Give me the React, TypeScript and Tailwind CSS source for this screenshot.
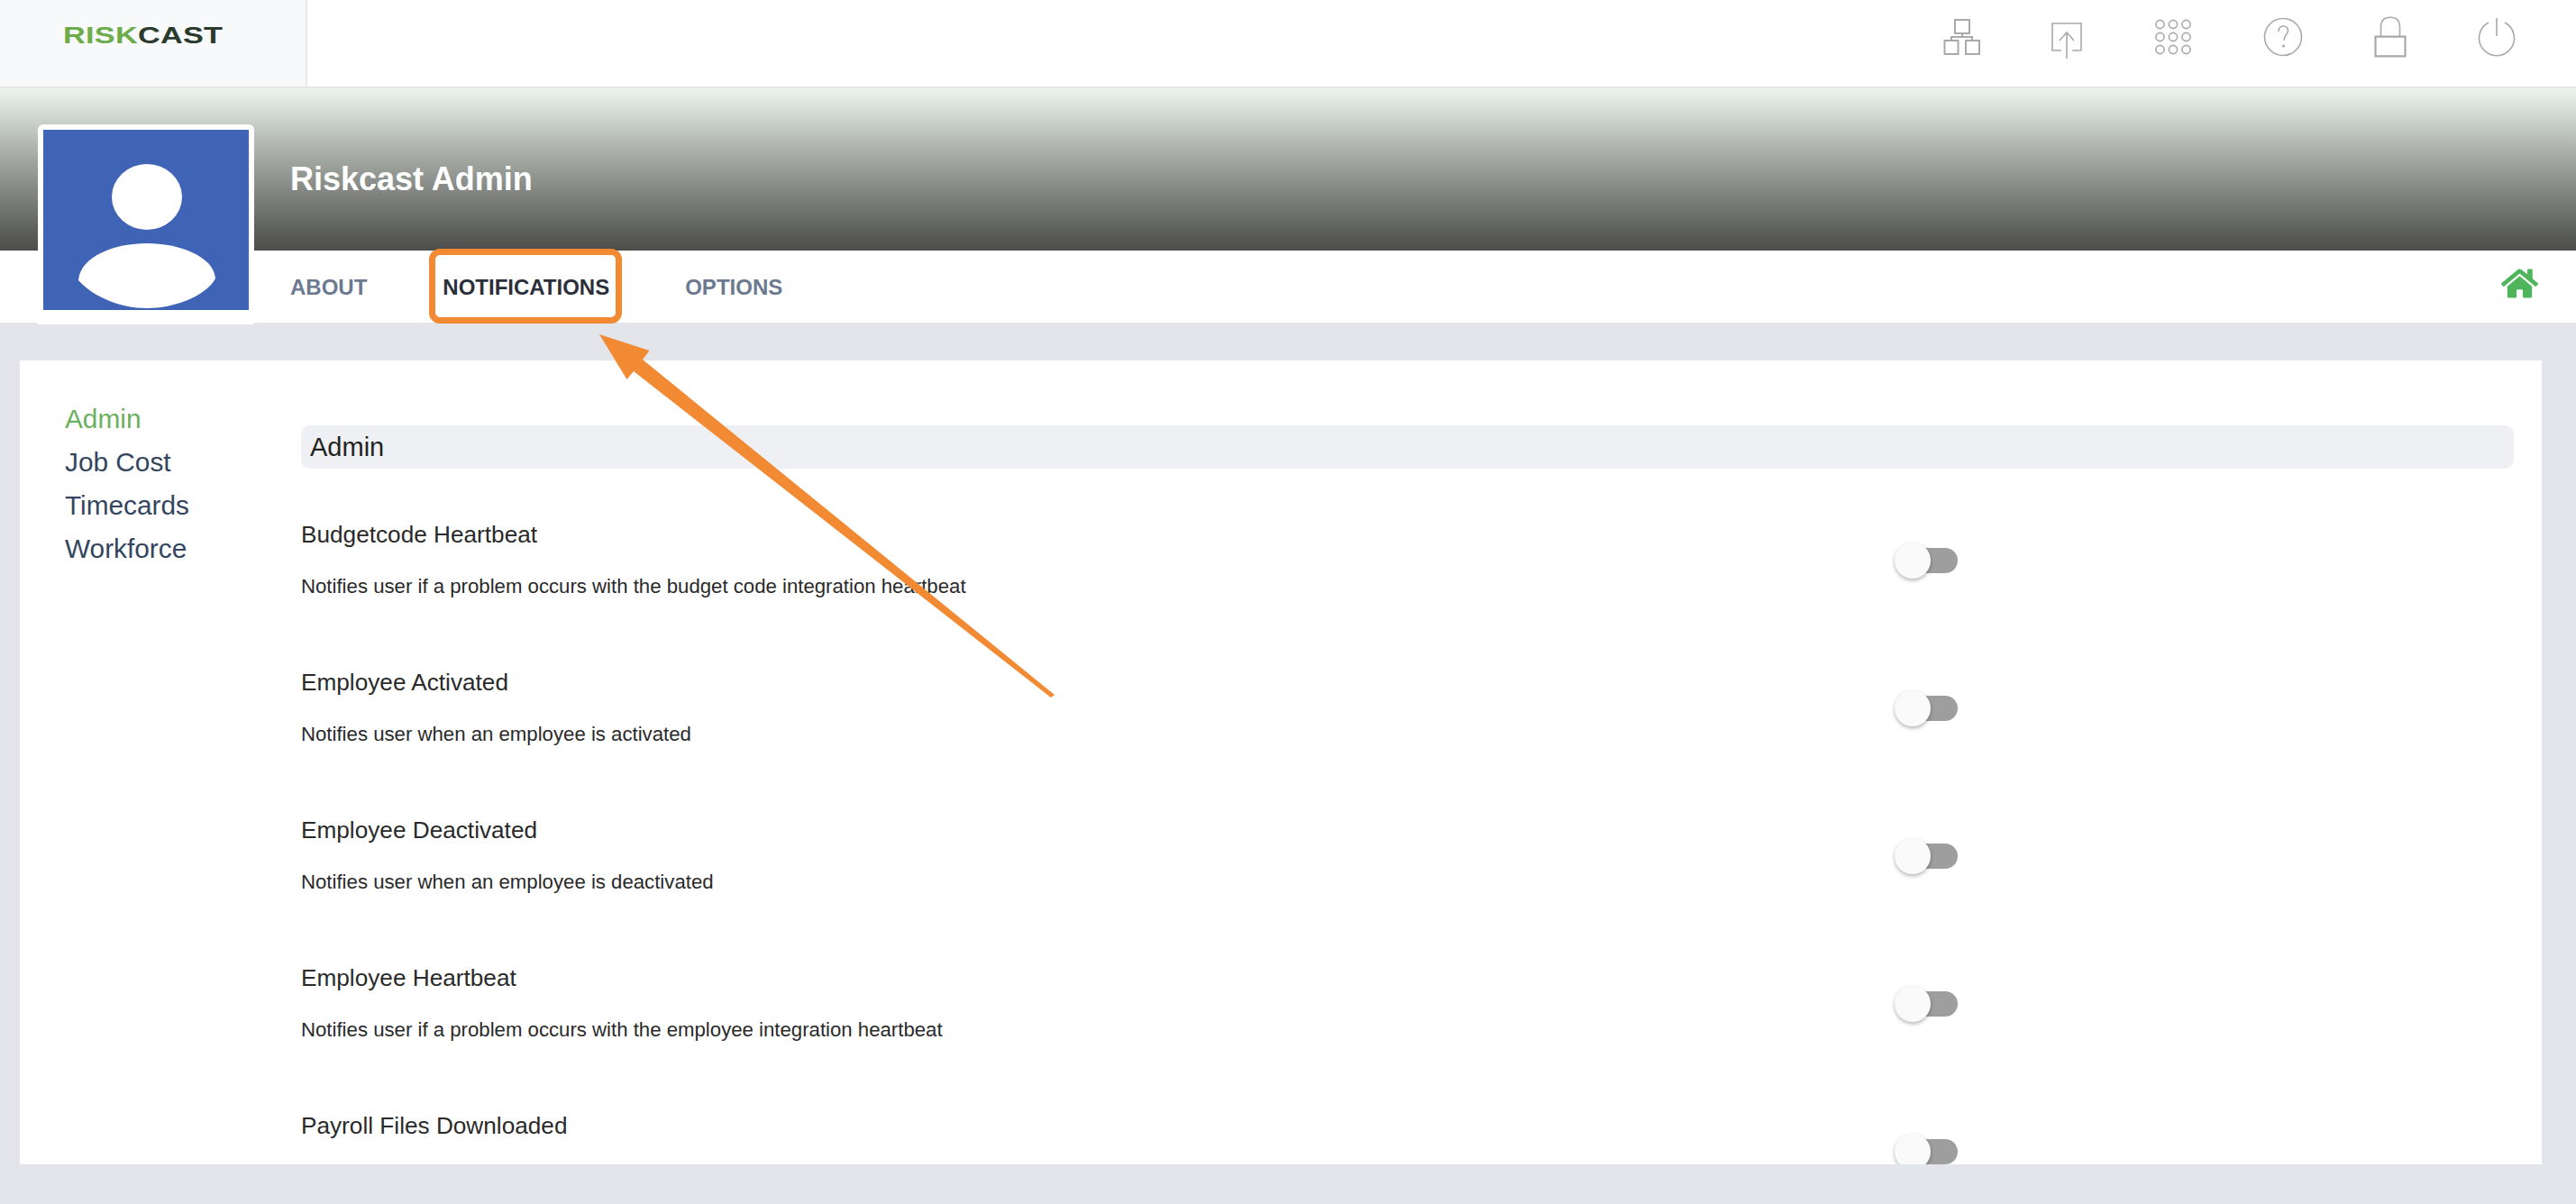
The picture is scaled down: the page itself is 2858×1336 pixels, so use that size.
import React from 'react';
import { FaHome } from 'react-icons/fa';

const notifications = [
  { title: 'Budgetcode Heartbeat', text: 'Notifies user if a problem occurs with the budget code integration heartbeat' },
  { title: 'Employee Activated', text: 'Notifies user when an employee is activated' },
  { title: 'Employee Deactivated', text: 'Notifies user when an employee is deactivated' },
  { title: 'Employee Heartbeat', text: 'Notifies user if a problem occurs with the employee integration heartbeat' },
  { title: 'Payroll Files Downloaded', text: '' },
];

const iconProps = {
  width: 48,
  height: 48,
  viewBox: '0 0 48 48',
  fill: 'none',
  stroke: '#a9a9a9',
  strokeWidth: 1.6,
};

const TopIcons = () => (
  <div className="flex items-start pr-[64px] pt-[18px]">
    <svg {...iconProps}>
      <path d="M16 4h16v15H16zM4.5 27h15v15h-15zM28 27h15v15H28zM24 19v4M12 27v-4h23v4" strokeWidth={2} />
    </svg>
    <svg {...iconProps} className="ml-[68px]">
      <path d="M18 38H8V8h32v30H30M24 47V18M16 27l8-9 8 9" />
    </svg>
    <svg {...iconProps} className="ml-[70px]">
      {[9.5, 24, 38.5].map(x =>
        [9, 23, 37].map(y => <circle key={`${x}-${y}`} cx={x} cy={y} r={4.6} />)
      )}
    </svg>
    <svg {...iconProps} className="ml-[74px]">
      <circle cx={24} cy={23} r={20.5} />
      <path d="M19 17c0-4 2.500-6 5.500-6s5 2.500 5 5c0 4-4.500 5-4.500 11" />
      <circle cx={24.500} cy={33} r={0.8} />
    </svg>
    <svg {...iconProps} className="ml-[71px]">
      <path d="M7.500 22.700h33v21.600h-33z" strokeWidth={2.2} />
      <path d="M13.500 22.700V12c0-7 4-10.700 10.500-10.700S34.500 5 34.500 12v10.700" />
    </svg>
    <svg {...iconProps} className="ml-[70px]">
      <path d="M15 7A19.500 19.500 0 1 0 33 7M24 2v20" />
    </svg>
  </div>
);

const Toggle = () => (
  <div className="relative mt-[25px] h-[40px] w-[70px] shrink-0">
    <div className="absolute left-[10px] top-[6px] h-[28px] w-[60px] rounded-full bg-[#9e9e9e]" />
    <div className="absolute left-0 top-0 h-[40px] w-[40px] rounded-full bg-[#fafafa] shadow-[0_2px_4px_rgba(0,0,0,0.3)]" />
  </div>
);

const App: React.FC = () => {
  return (
    <div className="relative flex h-[1336px] w-[2858px] flex-col overflow-hidden bg-[#e4e5ea] font-['Liberation_Sans',Arial,sans-serif]">
      {/* top bar */}
      <header className="flex h-[98px] shrink-0 justify-between border-b-2 border-[#e6e6e6] bg-white">
        <div className="flex w-[341px] items-center border-r-2 border-[#e9eaec] bg-[#f8f9fb] pb-[18px] pl-[70px]">
          <span className="origin-left scale-x-[1.37] text-[25px] font-bold leading-none tracking-[0.2px]">
            <span className="text-[#6cac4a]">RISK</span>
            <span className="text-[#2a3a2c]">CAST</span>
          </span>
        </div>
        <TopIcons />
      </header>

      {/* profile banner */}
      <div className="flex h-[180px] shrink-0 items-center bg-gradient-to-b from-[#eef5ee] to-[#4c4d4a] pl-[322px] pt-[22px]">
        <h1 className="text-[36px] font-bold text-white">Riskcast Admin</h1>
      </div>

      {/* tabs */}
      <nav className="flex h-[80px] shrink-0 items-center justify-between bg-white pl-[322px] pr-[42px]">
        <div className="flex gap-[84px] pt-[1px] text-[24px] font-bold text-[#6b7a90]">
          <span>ABOUT</span>
          <span className="text-[#2b2f3a]">NOTIFICATIONS</span>
          <span>OPTIONS</span>
        </div>
        <FaHome className="mb-[8px] text-[#4fb55a]" size={41} />
      </nav>

      {/* content */}
      <main className="ml-[22px] mr-[38px] mt-[42px] flex h-[892px] shrink-0 overflow-hidden bg-white pl-[50px] pr-[31px]">
        <aside className="w-[262px] shrink-0 pt-[41px] text-[29.8px] leading-[48px] text-[#34465f]">
          <div className="text-[#6ab05f]">Admin</div>
          <div>Job Cost</div>
          <div>Timecards</div>
          <div>Workforce</div>
        </aside>
        <section className="min-w-0 flex-1 pt-[72px]">
          <div className="flex h-[48px] items-center rounded-[10px] bg-[#eff0f4] pl-[10px] pt-[2px] text-[29px] text-[#222222]">
            Admin
          </div>
          <div className="mt-[57px]">
            {notifications.map(item => (
              <div key={item.title} className="flex h-[164px]">
                <div className="w-[1768px] shrink-0">
                  <div className="text-[26.2px] leading-[32px] text-[#2a2a2a]">{item.title}</div>
                  {item.text && (
                    <div className="mt-[28px] text-[22.2px] leading-[28px] text-[#2a2a2a]">{item.text}</div>
                  )}
                </div>
                <Toggle />
              </div>
            ))}
          </div>
        </section>
      </main>

      {/* avatar overlaps banner and tabs */}
      <div className="absolute left-[42px] top-[138px] h-[222px] w-[240px] rounded-t-[6px] bg-white pl-[6px] pt-[6px]">
        <svg width={228} height={200} viewBox="0 0 228 200" className="bg-[#3f63b5]">
          <ellipse cx={115} cy={74.500} rx={39} ry={36.500} fill="#fff" />
          <path d="M39 167C41 140 80 126 115 126S189 140 191 165C180 185 145 198 115 198S55 185 39 167Z" fill="#fff" />
        </svg>
      </div>

      {/* annotation */}
      <div className="absolute left-[476px] top-[276px] h-[83px] w-[214px] rounded-[12px] border-[7px] border-[#f28a33]" />
      <svg className="absolute left-0 top-0" width={2858} height={1336} viewBox="0 0 2858 1336">
        <polygon points="665,371 720.500,389 713,399 1170,771 1166,774 703,412 695.500,421" fill="#f28a33" />
      </svg>
    </div>
  );
};

export default App;
